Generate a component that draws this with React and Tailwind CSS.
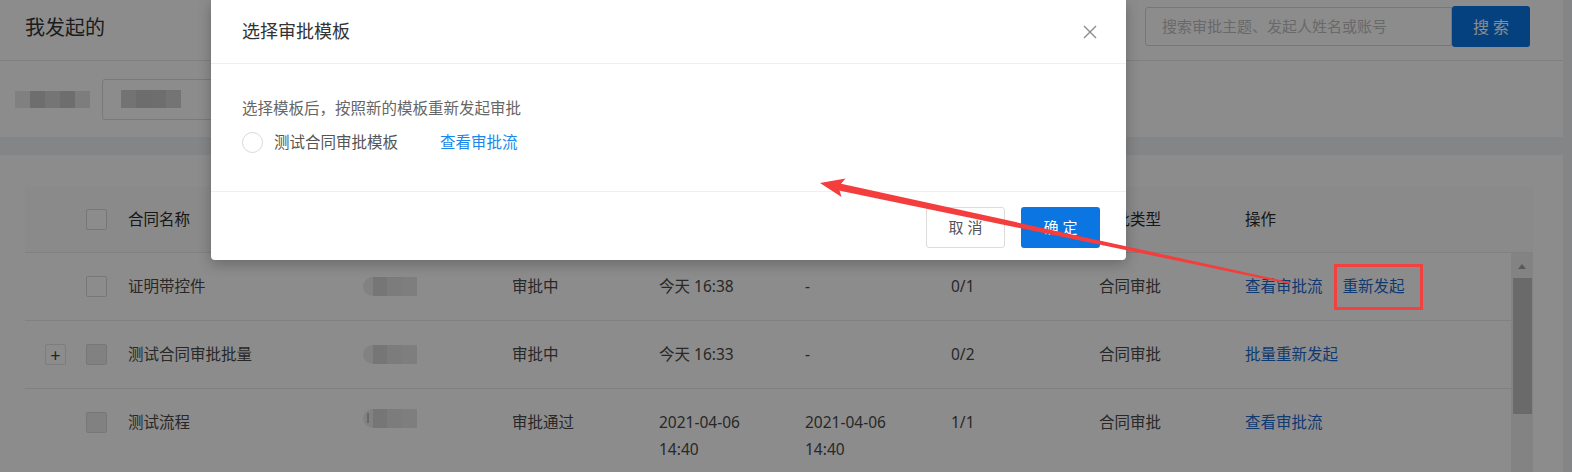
import React from "react";

const cols = ["w-[51px]", "w-[52px]", "w-[235px]", "w-[149px]", "w-[147px]", "w-[146px]", "w-[146px]", "w-[148px]", "w-[146px]", "w-[266px]"];

function Checkbox({ disabled }) {
  return (
    <span
      className={
        "block w-[21px] h-[21px] border border-[#d9d9d9] rounded-[2px] " +
        (disabled ? "bg-[#ececec]" : "bg-white")
      }
    />
  );
}

function Mosaic({ shades, h = "h-[16px]" }) {
  return (
    <span className="flex blur-[0.6px]">
      {shades.map((s, i) => (
        <span key={i} className={"block w-[15px] " + h} style={{ backgroundColor: s }} />
      ))}
    </span>
  );
}

function Pill({ tick }) {
  return (
    <span className="relative flex items-center h-[19px] w-[54px] overflow-hidden rounded-l-full bg-[#ededed] blur-[0.5px]">
      <span className="block w-[10px] h-full" />
      <span className="block w-[14px] h-full bg-[#d8d8d8]" />
      <span className="block w-[15px] h-full bg-[#e2e2e2]" />
      <span className="block w-[15px] h-full bg-[#e6e6e6]" />
      {tick && <span className="absolute left-[4px] top-[4px] w-[2px] h-[10px] bg-[#bdbdbd]" />}
    </span>
  );
}

function Row({ expand, disabled, name, status, time, end, progress, ops, tall, tick }) {
  const cells = [
    expand ? (
      <span className="ml-[20px] flex items-center justify-center w-[21px] h-[21px] border border-[#e3e3e3] rounded-[2px] bg-white text-[#444] text-[18px] leading-none">
        +
      </span>
    ) : null,
    <span className="ml-[10px]"><Checkbox disabled={disabled} /></span>,
    <span>{name}</span>,
    <Pill tick={tick} />,
    <span>{status}</span>,
    <span>{time}</span>,
    <span>{end}</span>,
    <span>{progress}</span>,
    <span>合同审批</span>,
    <span className="flex gap-[20px] text-[#1a6ad0]">{ops.map((o, i) => <span key={i}>{o}</span>)}</span>,
  ];
  return (
    <div
      className={
        "flex border-b border-[#ebebeb] text-[#4a4a4a] " +
        (tall ? "py-[20px] leading-[27px] items-start" : "h-[68px] items-center")
      }
    >
      {cells.map((c, i) => (
        <div key={i} className={cols[i] + " shrink-0 flex " + (tall && i < 2 ? "pt-[3px]" : "")}>
          {c}
        </div>
      ))}
    </div>
  );
}

export default function App() {
  const headers = [null, <span className="ml-[10px]"><Checkbox /></span>, "合同名称", null, null, null, null, null, "审批类型", "操作"];
  return (
    <div className="relative w-[1572px] h-[472px] overflow-hidden bg-[#f0f2f5] font-['Noto_Sans','Noto_Sans_CJK_SC',sans-serif] text-[15.5px]">
      <div className="w-[1563px]">
        {/* header */}
        <div className="h-[61px] bg-white border-b border-[#e8e8e8] flex justify-between pl-[25px] pr-[33px]">
          <div className="mt-[13px] text-[20px] leading-[30px] text-[#333]">我发起的</div>
          <div className="mt-[6px] flex items-center self-start">
            <div className="w-[307px] h-[39px] border border-[#d9d9d9] rounded-l-[3px] flex items-center pl-[16px] text-[15px] text-[#bfbfbf]">
              搜索审批主题、发起人姓名或账号
            </div>
            <div className="w-[78px] h-[41px] rounded-[3px] bg-[#0a77e6] text-white text-[16px] flex items-center justify-center tracking-[4px] pl-[4px]">
              搜索
            </div>
          </div>
        </div>
        {/* filter */}
        <div className="h-[76px] bg-white flex items-center pl-[15px]">
          <Mosaic shades={["#e9e9e9", "#c9c9c9", "#d6d6d6", "#c9c9c9", "#e3e3e3"]} h="h-[17px]" />
          <div className="ml-[12px] w-[200px] h-[41px] border border-[#dcdcdc] rounded-[3px] flex items-center pl-[18px]">
            <Mosaic shades={["#d2d2d2", "#c6c6c6", "#c8c8c8", "#d4d4d4"]} h="h-[18px]" />
          </div>
        </div>
        <div className="h-[18px]" />
        {/* card */}
        <div className="bg-white pt-[32px] pl-[25px] h-[317px]">
          <div className="w-[1508px] h-[66px] bg-[#fcfcfc] border-b border-[#ebebeb] flex items-center text-[#2a2a2a]">
            {headers.map((h, i) => (
              <div key={i} className={cols[i] + " shrink-0 flex"}>{h}</div>
            ))}
            <div className="w-[22px]" />
          </div>
          <div className="flex">
            <div className="w-[1486px]">
              <Row name="证明带控件" status="审批中" time="今天 16:38" end="-" progress="0/1" ops={["查看审批流", "重新发起"]} />
              <Row expand disabled name="测试合同审批批量" status="审批中" time="今天 16:33" end="-" progress="0/2" ops={["批量重新发起"]} />
              <Row tall disabled tick name="测试流程" status="审批通过" time={<>2021-04-06<br />14:40</>} end={<>2021-04-06<br />14:40</>} progress="1/1" ops={["查看审批流"]} />
            </div>
            <div className="w-[22px] bg-[#efefef] flex flex-col items-center">
              <svg width="12" height="25" viewBox="0 0 12 25" className="shrink-0">
                <path d="M2 16 L6 11 L10 16 Z" fill="#a3a3a3" />
              </svg>
              <div className="w-[19px] h-[136px] bg-[#c2c2c2]" />
            </div>
          </div>
        </div>
      </div>

      {/* mask */}
      <div className="absolute inset-0 bg-black/45" />

      {/* modal */}
      <div className="absolute left-[211px] top-0 w-[915px] h-[260px] bg-white rounded-b-[4px] shadow-[0_4px_14px_rgba(0,0,0,0.25)] flex flex-col">
        <div className="h-[64px] shrink-0 border-b border-[#efefef] flex items-center justify-between pl-[31px] pr-[29px]">
          <span className="text-[18px] text-[#333]">选择审批模板</span>
          <svg width="14" height="14" viewBox="0 0 14 14">
            <path d="M1 1 L13 13 M13 1 L1 13" stroke="#8c8c8c" strokeWidth="1.4" />
          </svg>
        </div>
        <div className="h-[128px] shrink-0 border-b border-[#efefef] pl-[31px] pt-[33px]">
          <div className="leading-[22px] text-[#666]">选择模板后，按照新的模板重新发起审批</div>
          <div className="mt-[12px] flex items-center leading-[22px]">
            <span className="block w-[21px] h-[21px] rounded-full border border-[#d9d9d9]" />
            <span className="ml-[11px] text-[#555]">测试合同审批模板</span>
            <span className="ml-[42px] text-[#1a87ee]">查看审批流</span>
          </div>
        </div>
        <div className="flex-1 flex justify-end items-start pt-[15px] pr-[26px] gap-[16px]">
          <div className="w-[79px] h-[41px] border border-[#dcdcdc] rounded-[3px] flex items-center justify-center text-[#555] text-[15px]">
            取 消
          </div>
          <div className="w-[79px] h-[41px] rounded-[3px] bg-[#0b75e2] flex items-center justify-center text-white text-[15px]">
            确 定
          </div>
        </div>
      </div>

      {/* annotations */}
      <div className="absolute left-[1334px] top-[264px] w-[89px] h-[46px] border-[3px] border-[#f24141]" />
      <svg className="absolute left-0 top-0 pointer-events-none" width="1572" height="472" viewBox="0 0 1572 472">
        <polygon points="834.0,189.4 835.4,182.5 1290.2,282.3 1289.8,284.1" fill="#f43d3d" />
        <polygon points="820,183 845.5,178.5 838.5,186.7 841.5,197.0" fill="#f43d3d" />
      </svg>
    </div>
  );
}
